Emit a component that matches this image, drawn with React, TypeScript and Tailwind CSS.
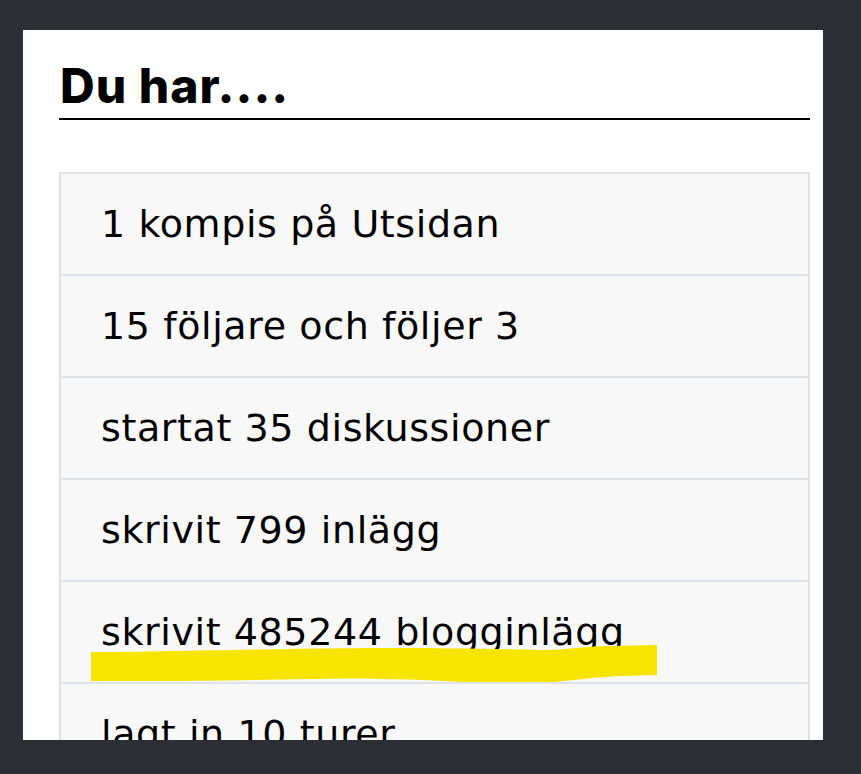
import React from "react";

const items = [
  "1 kompis på Utsidan",
  "15 följare och följer 3",
  "startat 35 diskussioner",
  "skrivit 799 inlägg",
  "skrivit 485244 blogginlägg",
  "lagt in 10 turer",
];

export default function App() {
  return (
    <div className="w-[861px] h-[774px] bg-[#2b2e35] overflow-hidden">
      <div className="ml-[23px] mt-[30px] w-[800px] h-[710px] bg-white overflow-hidden pl-[36px] pr-[13px] pt-[29px]">
        <h2
          className="text-[48px] leading-[53px] font-extrabold text-black tracking-[1px] border-b-2 border-black pb-[6px] pl-[1px]"
          style={{ fontFamily: 'Inter, "Liberation Sans", Arial, sans-serif' }}
        >
          Du har....
        </h2>
        <ul className="mt-[52px] border-x-2 border-[#dfe2e6]">
          {items.map((t, i) => (
            <li
              key={i}
              className="relative h-[102px] border-t-2 border-[#dfe2e6] bg-[#f8f8f8] flex items-center pl-[40px]"
            >
              <span
                className="text-[38px] leading-[38px] text-black tracking-[0.6px]"
                style={{ fontFamily: '"DejaVu Sans", sans-serif' }}
              >
                {t}
              </span>
              {i === 4 && (
                <svg
                  className="absolute left-[30px] top-[63px] pointer-events-none"
                  width="566"
                  height="40"
                  viewBox="0 0 566 40"
                >
                  <path
                    d="M0 7 C 40 7, 80 6, 140 5 C 200 4, 240 3, 300 3 C 360 3, 400 4, 450 5 C 480 5, 490 1, 520 1 L 566 0 L 566 30 L 529 31 C 490 33, 460 39, 422 39 C 380 38, 330 34, 288 34 C 260 33, 240 34, 217 34 C 160 35, 110 36, 61 36 L 0 36 Z"
                    fill="#f7e500"
                  />
                </svg>
              )}
            </li>
          ))}
        </ul>
      </div>
    </div>
  );
}
